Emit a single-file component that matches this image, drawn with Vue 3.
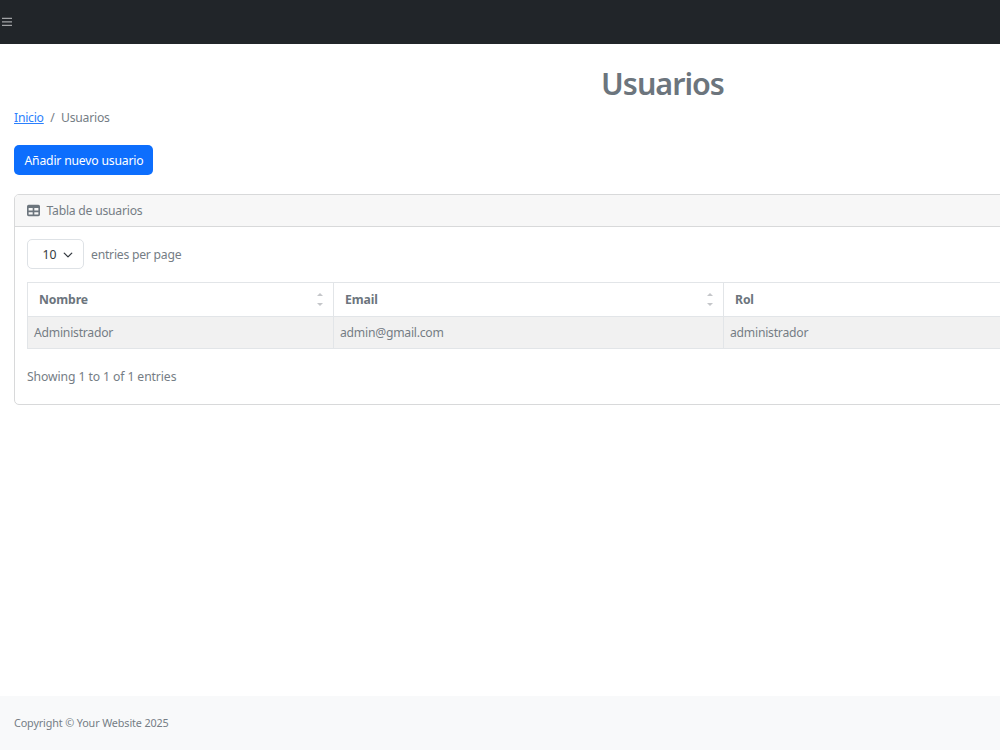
<script setup>
import { ref } from 'vue';

const columns = [
    { key: 'nombre', label: 'Nombre' },
    { key: 'email', label: 'Email' },
    { key: 'rol', label: 'Rol' },
];

const usuarios = ref([
    { nombre: 'Administrador', email: 'admin@gmail.com', rol: 'administrador' },
]);

const perPage = ref(10);
</script>

<template>
    <div class="layout">
        <nav class="topnav">
            <button class="toggle" aria-label="Menu">
                <svg viewBox="0 0 10 10" fill="currentColor">
                    <path d="M0 .7h10v1.3H0zM0 4.2h10v1.3H0zM0 7.7h10v1.3H0z" />
                </svg>
            </button>
        </nav>

        <main class="content">
            <h1 class="title">Usuarios</h1>

            <ol class="breadcrumb">
                <li><a href="#">Inicio</a></li>
                <li class="separator">/</li>
                <li>Usuarios</li>
            </ol>

            <button class="btn-primary">Añadir nuevo usuario</button>

            <div class="card">
                <div class="card-header">
                    <svg class="table-icon" viewBox="0 0 512 512" fill="currentColor">
                        <path fill-rule="evenodd"
                            d="M64 32h384a64 64 0 0 1 64 64v320a64 64 0 0 1-64 64H64a64 64 0 0 1-64-64V96a64 64 0 0 1 64-64zM64 160v96h160v-96zM288 160v96h160v-96zM64 320v96h160v-96zM288 320v96h160v-96z" />
                    </svg>
                    <span>Tabla de usuarios</span>
                </div>

                <div class="card-body">
                    <div class="datatable-top">
                        <div class="selector">
                            <span>{{ perPage }}</span>
                            <svg viewBox="0 0 16 16" fill="none" stroke="#343a40" stroke-width="2"
                                stroke-linecap="round" stroke-linejoin="round">
                                <path d="m2 5 6 6 6-6" />
                            </svg>
                        </div>
                        <span class="entries">entries per page</span>
                    </div>

                    <table class="datatable">
                        <thead>
                            <tr>
                                <th v-for="col in columns" :key="col.key" :class="col.key">
                                    <div class="sorter">
                                        <span>{{ col.label }}</span>
                                        <i class="arrows"></i>
                                    </div>
                                </th>
                            </tr>
                        </thead>
                        <tbody>
                            <tr v-for="usuario in usuarios" :key="usuario.email">
                                <td v-for="col in columns" :key="col.key" :class="col.key">{{ usuario[col.key] }}</td>
                            </tr>
                        </tbody>
                    </table>

                    <div class="info">Showing 1 to {{ usuarios.length }} of {{ usuarios.length }} entries</div>
                </div>
            </div>
        </main>

        <footer class="footer">Copyright © Your Website 2025</footer>
    </div>
</template>

<style>
body {
    margin: 0;
}
</style>

<style scoped>
* {
    box-sizing: border-box;
}

.layout {
    display: flex;
    flex-direction: column;
    height: 750px;
    overflow: hidden;
    font-family: "Noto Sans", "Open Sans", sans-serif;
    font-size: 12.2px;
    line-height: 20px;
    letter-spacing: -0.24px;
    color: #757d85;
    background: #fff;
}

.topnav {
    display: flex;
    align-items: center;
    flex: none;
    height: 44px;
    background: #212529;
}

.toggle {
    display: flex;
    padding: 0 0 0 2px;
    border: 0;
    background: none;
    color: #a2a4a6;
}

.toggle svg {
    width: 10px;
    height: 10px;
}

.content {
    flex: 1;
    width: 1325px;
    padding: 20px 14px 0;
}

.title {
    margin: 0;
    font-size: 30.5px;
    font-weight: 600;
    line-height: 39px;
    letter-spacing: -1px;
    text-align: center;
    color: #6c757d;
}

.breadcrumb {
    display: flex;
    margin: 5px 0 17px;
    padding: 0;
    list-style: none;
}

.breadcrumb a {
    color: #2a7ffd;
    text-decoration: underline;
}

.separator {
    padding: 0 6.5px;
}

.btn-primary {
    display: block;
    height: 30px;
    padding: 1px 10px 0 10.5px;
    border: 0;
    border-radius: 5px;
    font: inherit;
    letter-spacing: -0.19px;
    color: #fff;
    background: #0d6efd;
}

.card {
    margin-top: 19px;
    height: 211px;
    border: 1px solid #d8d9da;
    border-radius: 5px;
}

.card-header {
    display: flex;
    align-items: center;
    height: 32px;
    padding-left: 12px;
    border-bottom: 1px solid #d8d9da;
    border-radius: 4px 4px 0 0;
    background: #f7f7f7;
}

.table-icon {
    width: 13px;
    height: 13px;
    margin-right: 6.5px;
    color: #6c757d;
}

.card-body {
    padding: 12px;
}

.datatable-top {
    display: flex;
    align-items: center;
    margin-bottom: 13px;
}

.selector {
    display: flex;
    align-items: center;
    justify-content: space-between;
    width: 57px;
    height: 30px;
    margin-right: 7px;
    padding: 1px 10.5px 0 14.5px;
    border: 1px solid #dee2e6;
    border-radius: 5px;
    letter-spacing: 0;
    color: #343a40;
}

.selector svg {
    width: 10px;
    height: 10px;
}

.entries {
    padding-top: 2px;
}

.datatable {
    width: 1274px;
    border-collapse: collapse;
    table-layout: fixed;
}

.datatable th,
.datatable td {
    border: 1px solid #e2e5e8;
    text-align: left;
}

.datatable th {
    height: 34px;
    padding: 0 10px 0 11px;
    font-weight: 700;
    letter-spacing: -0.12px;
    color: #6c757d;
}

.datatable td {
    height: 32px;
    padding: 0 6px;
    background: #f1f1f1;
}

.datatable th.nombre {
    width: 306px;
}

.datatable th.email {
    width: 390px;
}

.sorter {
    display: flex;
    align-items: center;
    justify-content: space-between;
}

.arrows {
    display: flex;
    flex-direction: column;
    gap: 7px;
}

.arrows::before,
.arrows::after {
    content: "";
    border: 3px solid transparent;
    border-top-width: 0;
    border-bottom: 3px solid #c4c6c9;
}

.arrows::after {
    border-top: 3px solid #c4c6c9;
    border-bottom-width: 0;
}

.info {
    margin-top: 18px;
    letter-spacing: -0.1px;
}

.footer {
    flex: none;
    height: 54px;
    padding: 17px 14px;
    font-size: 10.8px;
    letter-spacing: -0.13px;
    background: #f8f9fa;
}
</style>
